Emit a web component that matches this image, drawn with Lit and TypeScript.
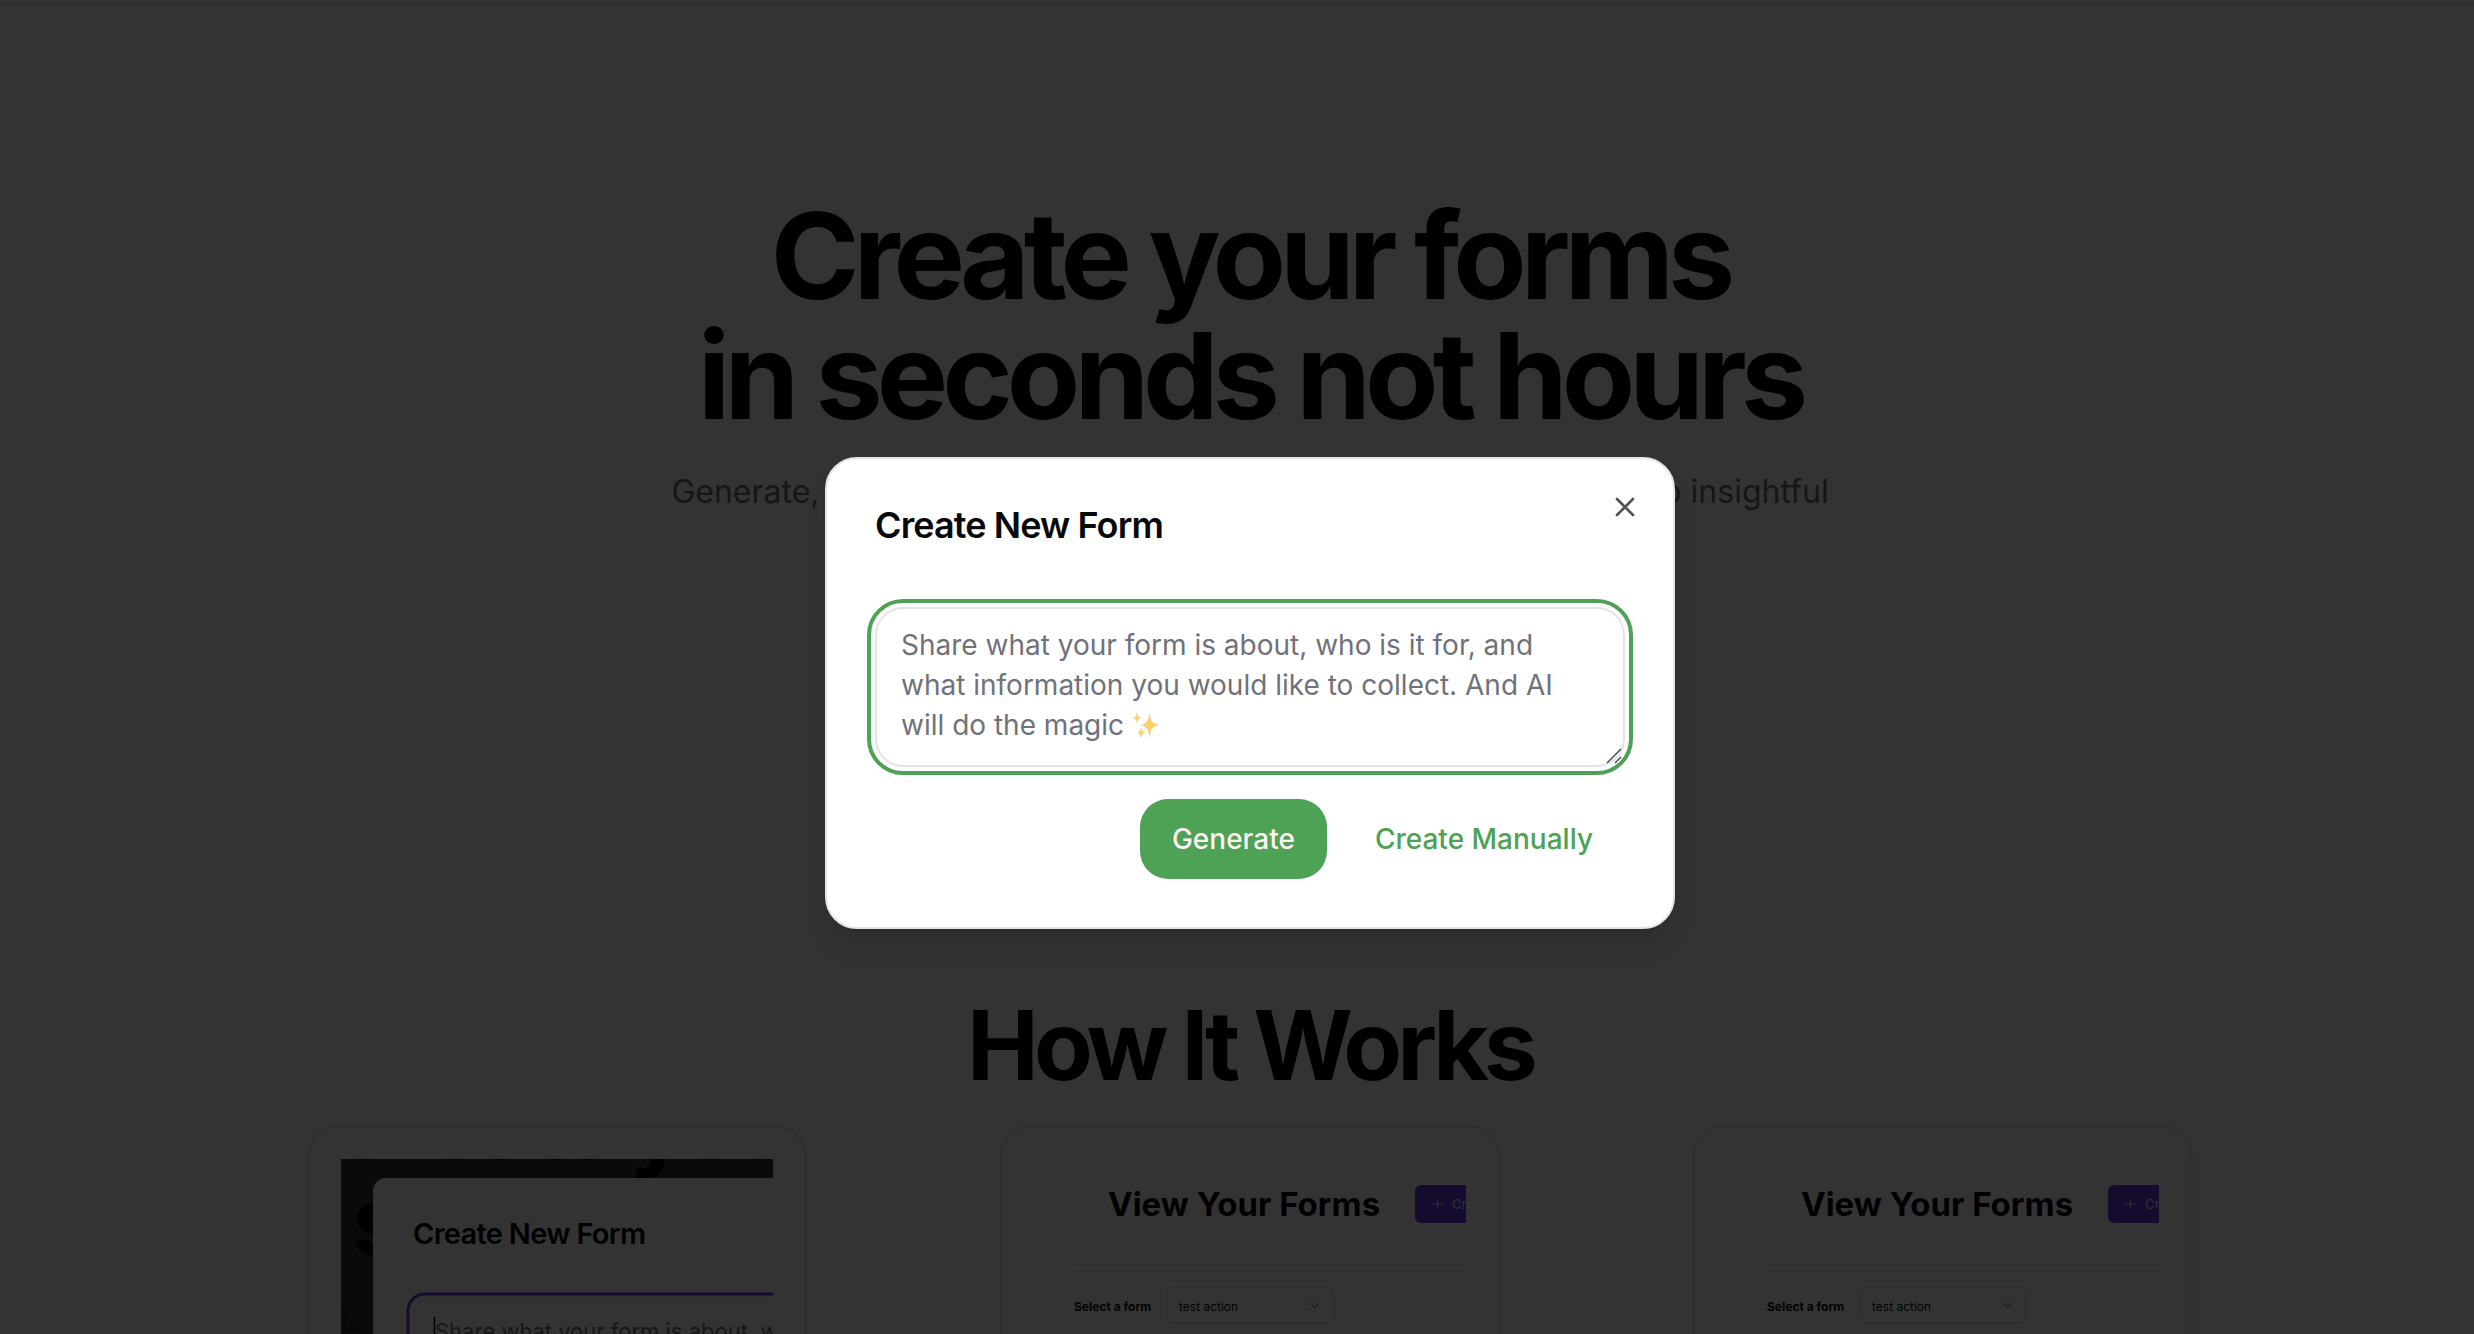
import { LitElement, html, css, svg } from "lit";
import { customElement } from "lit/decorators.js";

const formPreview = svg`
  <rect width="432" height="432" fill="#333"></rect>
  <text x="-16" y="0" font-size="97" font-weight="700" letter-spacing="-5">Create your forms</text>
  <text x="11" y="97" font-size="97" font-weight="700" letter-spacing="-5">s</text>
  <text x="0" y="171" font-size="27" fill="#222">te</text>
  <rect x="32" y="19" width="500" height="500" rx="13" fill="#fff"></rect>
  <text x="72" y="85" font-size="29" font-weight="600" letter-spacing="-0.7" fill="#09090b">Create New Form</text>
  <rect x="67" y="135" width="500" height="140" rx="17" fill="none" stroke="#7038e8" stroke-width="3"></rect>
  <rect x="73" y="141" width="500" height="130" rx="13" fill="none" stroke="#e4e4e7"></rect>
  <path d="M93.500 158v22" stroke="#000" stroke-width="1.500"></path>
  <text x="94" y="180" font-size="22" fill="#71717a">Share what your form is about, who</text>
`;

const listPreview = svg`
  <text x="74" y="57" font-size="33" font-weight="700" fill="#09090b">View Your Forms</text>
  <rect x="381" y="26" width="120" height="38" rx="6" fill="#7038e8"></rect>
  <path d="M403.500 40v10M398.500 45h10" stroke="#ddd6fe" stroke-width="1"></path>
  <text x="418" y="50" font-size="13" font-weight="500" fill="#ddd6fe">Create</text>
  <path d="M40 112.500h392" stroke="#e4e4e7"></path>
  <text x="40" y="152" font-size="12" font-weight="700" fill="#09090b">Select a form</text>
  <rect x="132.500" y="128.500" width="167" height="36" rx="5" fill="none" stroke="#e4e4e7"></rect>
  <text x="145" y="152" font-size="12" fill="#09090b">test action</text>
  <path d="M276 144l4.500 4.500l4.500-4.500" fill="none" stroke="#52525b" stroke-width="1"></path>
`;

@customElement("app-root")
export class AppRoot extends LitElement {
  static styles = css`
    :host {
      display: block;
      font-family: Inter, "Liberation Sans", sans-serif;
      color: #000;
      background: #fff;
    }
    * {
      box-sizing: border-box;
    }
    .shell {
      position: relative;
      height: 100vh;
      overflow: hidden;
    }
    .page {
      padding: 3px 0 0 26px;
    }
    .rule {
      margin: 0 0 0 -26px;
      border: 0;
      border-top: 2px solid #e4e4e7;
    }
    .hero {
      display: flex;
      flex-direction: column;
      align-items: center;
      gap: 28px;
      height: 992px;
      padding-top: 191px;
      text-align: center;
    }
    h1,
    h2,
    p {
      margin: 0;
    }
    h1 {
      font-size: 120px;
      line-height: 120px;
      font-weight: 700;
      letter-spacing: -0.05em;
    }
    .lead {
      max-width: 1200px;
      font-size: 32px;
      line-height: 56px;
      color: #71717a;
    }
    .works h2 {
      font-size: 96px;
      line-height: 96px;
      font-weight: 700;
      letter-spacing: -0.05em;
      text-align: center;
    }
    .cards {
      display: grid;
      grid-template-columns: repeat(3, 1fr);
      justify-items: center;
      max-width: 2080px;
      margin: 32px auto 0;
    }
    .card {
      width: 500px;
      padding: 32px;
      border: 2px solid #e4e4e7;
      border-radius: 32px;
    }
    .preview {
      display: block;
      width: 100%;
      font-family: Inter, "Liberation Sans", sans-serif;
    }
    .overlay {
      position: absolute;
      inset: 0;
      display: flex;
      align-items: center;
      justify-content: center;
      padding: 52px 0 0 26px;
      background: rgba(0, 0, 0, 0.8);
    }
    .dialog {
      position: relative;
      width: 850px;
      max-width: 100%;
      padding: 48px;
      border: 2px solid #e4e4e7;
      border-radius: 32px;
      background: #fff;
      box-shadow: 0 20px 30px -6px rgba(0, 0, 0, 0.1), 0 8px 12px -8px rgba(0, 0, 0, 0.1);
    }
    .dialog h2 {
      font-size: 36px;
      line-height: 36px;
      font-weight: 600;
      letter-spacing: -0.025em;
      color: #09090b;
    }
    .close {
      position: absolute;
      top: 32px;
      right: 32px;
      display: flex;
      padding: 0;
      border: 0;
      background: none;
      color: #09090b;
      opacity: 0.7;
    }
    .field {
      position: relative;
      display: flex;
      margin: 64px 0 32px;
    }
    textarea {
      width: 100%;
      height: 160px;
      padding: 16px 24px;
      border: 2px solid #e4e4e7;
      border-radius: 28px;
      outline: 4px solid #4da255;
      outline-offset: 4px;
      background: none;
      font: 400 28px/40px Inter, "Liberation Sans", sans-serif;
      resize: none;
    }
    textarea::placeholder {
      color: #71717a;
      opacity: 1;
    }
    .sparkles {
      position: absolute;
      left: 257px;
      top: 105px;
    }
    .grip {
      position: absolute;
      right: 2px;
      bottom: 2px;
    }
    .actions {
      display: flex;
      justify-content: flex-end;
      gap: 16px;
    }
    .btn {
      height: 80px;
      padding: 0 32px;
      border: 0;
      border-radius: 28px;
      background: #4da255;
      color: #fff1f2;
      font: 500 28px/40px Inter, "Liberation Sans", sans-serif;
    }
    .btn.link {
      background: none;
      color: #4da255;
    }
  `;

  private card(art: unknown, label: string) {
    return html`<article class="card">
      <svg class="preview" viewBox="0 0 432 432" role="img" aria-label=${label}>${art}</svg>
    </article>`;
  }

  render() {
    return html`
      <div class="shell">
        <main class="page">
          <hr class="rule" />
          <section class="hero">
            <h1>Create your forms<br />in seconds not hours</h1>
            <p class="lead">
              Generate, publish and share your form right away with AI. Dive into insightful
            </p>
          </section>
          <section class="works">
            <h2>How It Works</h2>
            <div class="cards">
              ${this.card(formPreview, "Create New Form")}
              ${this.card(listPreview, "View Your Forms")}
              ${this.card(listPreview, "View Your Forms")}
            </div>
          </section>
        </main>
        <div class="overlay">
          <div class="dialog" role="dialog" aria-modal="true" aria-labelledby="title">
            <h2 id="title">Create New Form</h2>
            <div class="field">
              <textarea
                aria-labelledby="title"
                placeholder="Share what your form is about, who is it for, and what information you would like to collect. And AI will do the magic"
              ></textarea>
              <svg class="sparkles" width="28" height="28" viewBox="0 0 28 28" fill="#f9d262" stroke="#f6c9a0" stroke-width="0.500" aria-hidden="true">
                <path d="M17.500 1.500Q18.200 12 26.500 13Q18.200 14 17.500 25Q16.800 14 9 13Q16.800 12 17.500 1.500Z"></path>
                <path d="M5 1Q5.500 5.500 8.500 6Q5.500 6.500 5 11Q4.500 6.500 1.500 6Q4.500 5.500 5 1Z"></path>
                <path d="M9 16Q9.700 20 13 20.500Q9.700 21 9 25.500Q8.300 21 5.500 20.500Q8.300 20 9 16Z"></path>
              </svg>
              <svg class="grip" width="18" height="18" viewBox="0 0 18 18" stroke="#444" stroke-width="1.400" aria-hidden="true">
                <path d="M2 16L16 2M10 16L16 10"></path>
              </svg>
            </div>
            <div class="actions">
              <button class="btn" type="button">Generate</button>
              <button class="btn link" type="button">Create Manually</button>
            </div>
            <button class="close" type="button" aria-label="Close">
              <svg width="32" height="32" viewBox="0 0 24 24" fill="none" stroke="currentColor" stroke-width="2" stroke-linecap="round" stroke-linejoin="round" aria-hidden="true">
                <path d="M18 6 6 18M6 6l12 12"></path>
              </svg>
            </button>
          </div>
        </div>
      </div>
    `;
  }
}
